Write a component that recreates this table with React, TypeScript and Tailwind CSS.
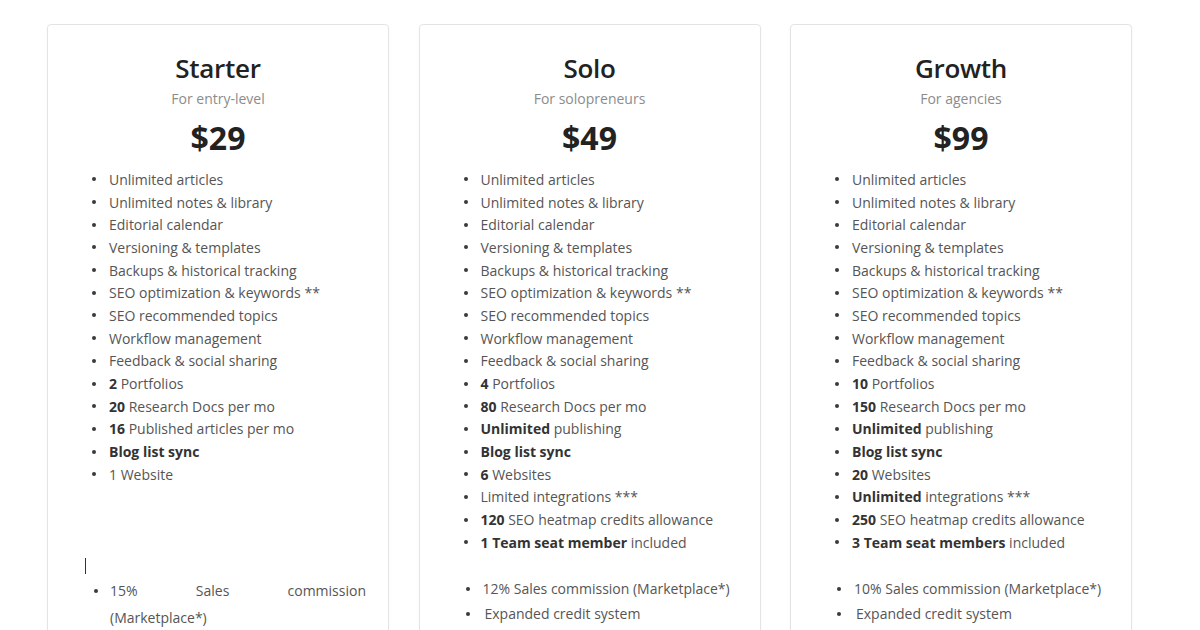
import React from "react";

type Item = { b?: string; t?: string };

interface Plan {
  name: string;
  tagline: string;
  price: string;
  items: Item[];
  extras: string[];
  starter?: boolean;
}

const base: Item[] = [
  { t: "Unlimited articles" },
  { t: "Unlimited notes & library" },
  { t: "Editorial calendar" },
  { t: "Versioning & templates" },
  { t: "Backups & historical tracking" },
  { t: "SEO optimization & keywords **" },
  { t: "SEO recommended topics" },
  { t: "Workflow management" },
  { t: "Feedback & social sharing" },
];

const plans: Plan[] = [
  {
    name: "Starter",
    tagline: "For entry-level",
    price: "$29",
    starter: true,
    items: [
      ...base,
      { b: "2", t: " Portfolios" },
      { b: "20", t: " Research Docs per mo" },
      { b: "16", t: " Published articles per mo" },
      { b: "Blog list sync" },
      { t: "1 Website" },
    ],
    extras: [],
  },
  {
    name: "Solo",
    tagline: "For solopreneurs",
    price: "$49",
    items: [
      ...base,
      { b: "4", t: " Portfolios" },
      { b: "80", t: " Research Docs per mo" },
      { b: "Unlimited", t: " publishing" },
      { b: "Blog list sync" },
      { b: "6", t: " Websites" },
      { t: "Limited integrations ***" },
      { b: "120", t: " SEO heatmap credits allowance" },
      { b: "1 Team seat member", t: " included" },
    ],
    extras: ["12% Sales commission (Marketplace*)", "Expanded credit system"],
  },
  {
    name: "Growth",
    tagline: "For agencies",
    price: "$99",
    items: [
      ...base,
      { b: "10", t: " Portfolios" },
      { b: "150", t: " Research Docs per mo" },
      { b: "Unlimited", t: " publishing" },
      { b: "Blog list sync" },
      { b: "20", t: " Websites" },
      { b: "Unlimited", t: " integrations ***" },
      { b: "250", t: " SEO heatmap credits allowance" },
      { b: "3 Team seat members", t: " included" },
    ],
    extras: ["10% Sales commission (Marketplace*)", "Expanded credit system"],
  },
];

function Dot() {
  return <span className="block w-[4px] h-[4px] rounded-full bg-[#3a3a3a] shrink-0" />;
}

function Card({ plan }: { plan: Plan }) {
  return (
    <div className="w-[342px] h-[640px] shrink-0 bg-white border border-[#e4e4e4] rounded-[4px] shadow-[0_1px_3px_rgba(0,0,0,0.04)] flex flex-col pt-[27px]">
      {/* header */}
      <div className="text-center text-[26px] leading-[32px] font-semibold text-[#222] tracking-[-0.3px]">
        {plan.name}
      </div>
      <div className="mt-[5px] text-center text-[14px] leading-[20px] text-[#8c8c8c]">
        {plan.tagline}
      </div>
      <div className="mt-[9px] text-center text-[32px] leading-[40px] font-bold text-[#222]">
        {plan.price}
      </div>

      {/* features */}
      <ul className="mt-[10px] h-[386px] pl-[44px] pr-[20px]">
        {plan.items.map((it, i) => (
          <li key={i} className="flex items-center h-[22.7px] text-[14px] text-[#555]">
            <Dot />
            <span className="ml-[13px] whitespace-nowrap">
              {it.b && <b className="font-bold text-[#333]">{it.b}</b>}
              {it.t}
            </span>
          </li>
        ))}
      </ul>

      {plan.starter ? (
        <div className="pl-[37px] pr-[20px] text-[14px] text-[#555]">
          <div className="h-[16px] w-[1px] bg-[#333] mt-[4px]" />
          <div className="mt-[3px] flex">
            <span className="mt-[12px] ml-[9px]">
              <Dot />
            </span>
            <div className="ml-[12px] w-[256px]">
              <div className="flex justify-between leading-[27px]">
                <span>15%</span>
                <span>Sales</span>
                <span>commission</span>
              </div>
              <div className="leading-[27px]">(Marketplace*)</div>
            </div>
          </div>
        </div>
      ) : (
        <ul className="mt-[22px] pl-[46px] text-[14px] text-[#555]">
          {plan.extras.map((e, i) => (
            <li key={i} className="flex items-center h-[25px]">
              <Dot />
              <span className={i === 1 ? "ml-[15px]" : "ml-[13px]"}>{e}</span>
            </li>
          ))}
        </ul>
      )}
    </div>
  );
}

export default function App() {
  return (
    <div
      className="w-[1200px] h-[630px] overflow-hidden bg-white flex gap-[29.5px] pl-[47px] pt-[24px]"
      style={{ fontFamily: '"Open Sans", "Noto Sans", sans-serif' }}
    >
      {plans.map((p) => (
        <Card key={p.name} plan={p} />
      ))}
    </div>
  );
}
